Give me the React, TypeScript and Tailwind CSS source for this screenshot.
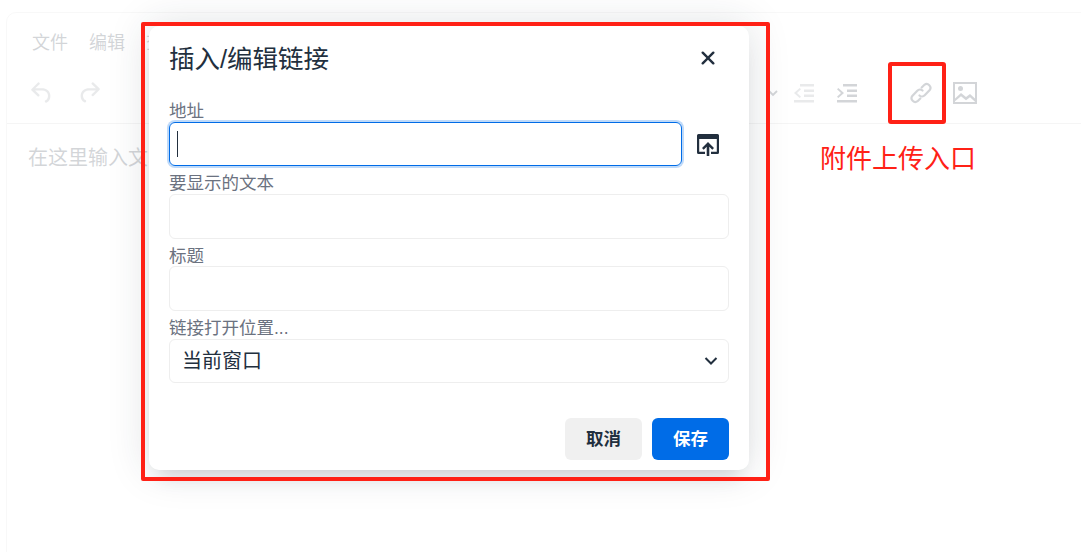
import React from 'react';

const cjk = "font-['Liberation_Sans','Noto_Sans_CJK_SC',sans-serif]";

function Field({ label, children }: { label: string; children: React.ReactNode }) {
  return (
    <div className="flex flex-col">
      <label className="h-[18px] text-[17.5px] leading-[15px] text-[#6b7280]">{label}</label>
      {children}
    </div>
  );
}

function ToolbarIcon({ children, dim, box = '0 0 24 24' }: { children: React.ReactNode; dim?: boolean; box?: string }) {
  return (
    <svg className={dim ? 'opacity-50' : ''} width="24" height="24" viewBox={box} fill="currentColor">
      {children}
    </svg>
  );
}

export default function App() {
  return (
    <div className={`relative h-[552px] w-[1081px] overflow-hidden bg-white ${cjk}`}>
      {/* Editor behind the dialog */}
      <div className="absolute left-[6px] top-[12px] h-[560px] w-[1100px] rounded-[10px] border border-[#dddddd] bg-white">
        <div className="flex h-[59px] items-center gap-[21px] pl-[25px] pt-[2px] text-[18px] text-[#222f3e]">
          <span>文件</span>
          <span>编辑</span>
          <span>查看</span>
        </div>
        <div className="flex h-[52px] items-center border-b border-[#cccccc] pb-[9px] text-[#222f3e]">
          <div className="flex items-center gap-[23px] pl-[23px]">
            <ToolbarIcon dim box="2 2 20 20">
              <path d="M6.400 8H12c3.700 0 6.200 2 6.800 5.100.6 2.700-.4 5.600-2.900 6.800a1 1 0 0 1-1-1.800c1.600-.8 2.400-2.900 2-4.600C16.600 11.400 14.800 10 12 10H6.200l3.500 3.300a1 1 0 0 1-1.400 1.400l-5-4.700a1 1 0 0 1 0-1.400l5-5a1 1 0 1 1 1.400 1.400L6.400 8z" />
            </ToolbarIcon>
            <ToolbarIcon dim box="2 2 20 20">
              <path d="M17.600 10H12c-2.800 0-4.400 1.400-4.900 3.300-.4 1.700.4 3.800 2 4.600a1 1 0 0 1-1 1.800c-2.500-1.200-3.500-4.100-2.900-6.800C5.800 10 8.300 8 12 8h5.800l-3.500-3.300a1 1 0 0 1 1.400-1.400l5 4.700a1 1 0 0 1 0 1.400l-5 5a1 1 0 0 1-1.400-1.400l3.800-3.500z" />
            </ToolbarIcon>
          </div>
          <svg className="ml-[667px]" width="10" height="10" viewBox="0 0 10 10" fill="none" stroke="currentColor" strokeWidth="1.800">
            <path d="M1 3l4 4 4-4" />
          </svg>
          <div className="ml-[14px] flex items-center gap-[19px]">
            <ToolbarIcon dim>
              <path d="M8 3h14v2.500H8V3zm4 5.500h10V11H12V8.500zm0 5h10V16H12v-2.500zM2 19h20v2.500H2V19zM9 8.200 5 12l4 3.800-1.300 1.300L2 12l5.700-5.100L9 8.200z" />
            </ToolbarIcon>
            <ToolbarIcon>
              <path d="M8 3h14v2.500H8V3zm4 5.500h10V11H12V8.500zm0 5h10V16H12v-2.500zM2 19h20v2.500H2V19zM3.300 6.900 9 12l-5.700 5.100L2 15.800 6 12 2 8.200l1.300-1.300z" />
            </ToolbarIcon>
          </div>
          <div className="ml-[50px] flex items-center gap-[20px]">
            <svg width="24" height="24" viewBox="0 0 24 24" fill="none" stroke="currentColor" strokeWidth="2.200" strokeLinecap="round">
              <path d="M10.500 14.500a3.700 3.700 0 0 0 5.200-.2l5-5.200a3.800 3.800 0 0 0-5.300-5.300l-2.700 2.700" />
              <path d="M13.500 9.500a3.700 3.700 0 0 0-5.200.2l-5 5.200a3.800 3.800 0 0 0 5.300 5.300l2.700-2.700" />
            </svg>
            <svg width="24" height="24" viewBox="0 0 24 24" fill="currentColor" fillRule="evenodd">
              <path d="M0 1h24v22H0V1zm2 2v14.500l6-5.500 5 4 4-3 5 4.500V3H2zm0 17.200V21h20v-.3l-5-4.500-4 3-5-4-6 5z" />
              <circle cx="7.500" cy="7.500" r="2.500" />
            </svg>
          </div>
        </div>
        <div className="pl-[21px] pt-[22px] text-[20px] leading-[24px] text-[#222f3e]">在这里输入文本</div>
      </div>

      {/* Scrim */}
      <div className="absolute inset-0 bg-white/80" />

      {/* Dialog */}
      <div className="absolute left-[149px] top-[26px] flex h-[444px] w-[600px] flex-col rounded-[10px] bg-white px-[20px] shadow-[0_16px_16px_-10px_rgba(34,47,62,0.15),0_0_40px_1px_rgba(34,47,62,0.15)]">
        <div className="flex h-[78px] items-start justify-between pt-[17px]">
          <h2 className="text-[25.500px] leading-[32px] text-[#222f3e]">插入/编辑链接</h2>
          <svg className="mr-[7px] mt-[1px]" width="28" height="28" viewBox="0 0 24 24" fill="#222f3e">
            <path d="M17.300 8.200 13.400 12l3.900 3.800a1 1 0 0 1-1.500 1.500L12 13.400l-3.800 3.900a1 1 0 0 1-1.500-1.500l3.900-3.800-3.900-3.800a1 1 0 0 1 1.500-1.500l3.800 3.900 3.800-3.900a1 1 0 0 1 1.500 1.500z" />
          </svg>
        </div>
        <div className="flex flex-col gap-[10px]">
          <Field label="地址">
            <div className="flex items-center">
              <div className="flex h-[44px] w-[513px] items-center rounded-[6px] border border-[#006ce7] pl-[7px] shadow-[0_0_0_2px_rgba(0,108,231,0.25)]">
                <div className="h-[26px] w-px bg-[#222f3e]" />
              </div>
              <svg className="ml-[14px] shrink-0" width="24" height="24" viewBox="0 0 24 24" fill="#222f3e" fillRule="evenodd">
                <path d="M2.500 2h19A1.500 1.500 0 0 1 23 3.500v17a1.500 1.500 0 0 1-1.500 1.500H15v-2.200h5.800V7H3.200v12.800H9V22H2.500A1.500 1.500 0 0 1 1 20.500v-17A1.500 1.500 0 0 1 2.500 2z" />
                <path d="M10.700 24v-9.200l-3 3-1.700-1.700 6-6 6 6-1.700 1.700-3-3V24h-2.600z" />
              </svg>
            </div>
          </Field>
          <Field label="要显示的文本">
            <div className="h-[45px] rounded-[6px] border border-[#eeeeee]" />
          </Field>
          <Field label="标题">
            <div className="mt-[-1px] h-[45px] rounded-[6px] border border-[#eeeeee]" />
          </Field>
          <Field label="链接打开位置...">
            <div className="flex h-[44px] items-center justify-between rounded-[6px] border border-[#eeeeee] pl-[12px] pr-[7px] text-[20px] text-[#222f3e]">
              <span>当前窗口</span>
              <svg width="20" height="20" viewBox="0 0 20 20" fill="none" stroke="#222f3e" strokeWidth="2">
                <path d="M4.500 7l5.500 5.500L15.500 7" />
              </svg>
            </div>
          </Field>
        </div>
        <div className="mt-[35px] flex justify-end gap-[10px]">
          <button className="h-[42px] w-[77px] rounded-[6px] bg-[#f0f0f0] text-[17.500px] font-bold text-[#222f3e]">取消</button>
          <button className="h-[42px] w-[77px] rounded-[6px] bg-[#006ce7] text-[17.500px] font-bold text-white">保存</button>
        </div>
      </div>

      {/* Annotations */}
      <div className="absolute left-[141px] top-[22px] h-[459px] w-[629px] rounded-[2px] border-4 border-[#ff2116]" />
      <div className="absolute left-[888px] top-[62px] h-[62px] w-[58px] rounded-[3px] border-4 border-[#ff2116]" />
      <div className="absolute left-[820px] top-[143px] text-[26px] leading-[32px] text-[#ff2116]">附件上传入口</div>
    </div>
  );
}
